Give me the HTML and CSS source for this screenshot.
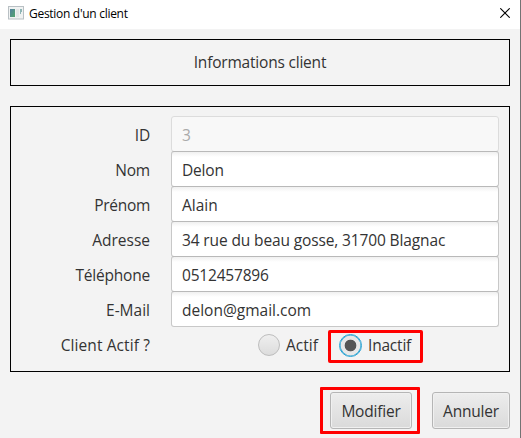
FILE: index.html
```html
<!DOCTYPE html>
<html lang="fr">
<head>
<meta charset="utf-8">
<title>Gestion d'un client</title>
<link rel="stylesheet" href="styles.css">
</head>
<body>
<div class="window">
  <header class="titlebar">
    <svg class="app-icon" width="16" height="14" viewBox="0 0 16 14">
      <defs><linearGradient id="pane" x1="0" y1="0" x2="1" y2="1"><stop offset="0" stop-color="#527f9f"/><stop offset="1" stop-color="#54a66c"/></linearGradient></defs>
      <rect x=".5" y=".5" width="15" height="12.5" fill="#f0f2f2" stroke="#b9c0c4"/>
      <rect x="2" y="3" width="5" height="8" fill="url(#pane)"/>
      <rect x="8" y="3" width="3" height="8" fill="#e3e6e7"/>
      <path d="M12 3h2v3h-1v2h-1z" fill="#8db5b5"/>
    </svg>
    <span class="title">Gestion d'un client</span>
    <svg class="close" width="10" height="10" viewBox="0 0 10 10"><path d="M.3.3l9.4 9.4M9.7.3L.3 9.7" stroke="#000" stroke-width="1.1"/></svg>
  </header>
  <main class="content">
    <h1 class="heading"><span>Informations client</span></h1>
    <form class="panel">
      <label>ID</label><div class="field disabled"><span>3</span></div>
      <label>Nom</label><div class="field"><span>Delon</span></div>
      <label class="tight">Prénom</label><div class="field"><span class="normal">Alain</span></div>
      <label class="normal">Adresse</label><div class="field"><span class="address">34 rue du beau gosse, 31700 Blagnac</span></div>
      <label>Téléphone</label><div class="field"><span>0512457896</span></div>
      <label class="normal">E-Mail</label><div class="field"><span class="normal">delon@gmail.com</span></div>
      <label class="loose">Client Actif ?</label>
      <div class="radios">
        <div class="option"><span class="radio"></span><span class="normal">Actif</span></div>
        <div class="option marked"><span class="radio selected"></span><span>Inactif</span></div>
      </div>
    </form>
    <footer class="actions">
      <div class="highlight"><button class="modify"><span>Modifier</span></button></div>
      <button class="cancel"><span>Annuler</span></button>
    </footer>
  </main>
</div>
</body>
</html>
```
FILE: styles.css
```css
* { box-sizing: border-box; }
body {
  margin: 0;
  font: 15.5px/20px "Open Sans", "Noto Sans", sans-serif;
  color: #333;
  letter-spacing: -0.2px;
  white-space: nowrap;
}
.normal { letter-spacing: 0; }
.tight { letter-spacing: -0.3px; }
.loose { letter-spacing: 0.1px; }
.address { letter-spacing: -0.13px; }
.window {
  width: 521px;
  height: 438px;
  background: #f3f3f3;
  border-right: 1px solid #737373;
  overflow: hidden;
}
.titlebar {
  display: flex;
  align-items: center;
  height: 29px;
  padding: 0 10px 3px 8px;
  background: #fff;
}
.title {
  margin: 2px auto 0 5px;
  font-size: 12px;
  line-height: 16px;
  color: #000;
  letter-spacing: -0.29px;
}
.content { padding: 10px 10px 0; }
.heading {
  display: flex;
  align-items: center;
  justify-content: center;
  height: 47px;
  margin: 0 0 20px;
  padding-bottom: 1px;
  border: 1px solid #000;
  font: inherit;
}
.panel {
  display: grid;
  grid-template-columns: 140px 328px;
  grid-template-rows: repeat(6, 35px) 36px;
  column-gap: 20px;
  height: 266px;
  padding-top: 9px;
  border: 1px solid #000;
}
.panel label {
  padding-right: 1px;
  text-align: right;
  line-height: 38px;
}
.field {
  height: 36px;
  padding-left: 10px;
  line-height: 36px;
  border: 1px solid #c8c8c8;
  border-top-color: #b9b9b9;
  border-radius: 3px;
  background: linear-gradient(#f0f0f0, #fff 5px);
}
.field.disabled {
  color: #aaa;
  border-color: #dcdcdc;
  background: #f8f8f8;
}
.radios {
  display: flex;
  height: 33px;
  margin-top: 4px;
  padding-left: 87px;
}
.option {
  display: flex;
  align-items: center;
  height: 30px;
}
.radio {
  flex: none;
  width: 22px;
  height: 22px;
  margin-right: 6px;
  border: 1px solid #bdbdbd;
  border-radius: 50%;
  background: linear-gradient(#efefef, #dcdcdc);
}
.radio.selected {
  width: 23px;
  height: 23px;
  border: 1px solid #26a3d4;
  box-shadow: inset 0 0 0 0.6px #26a3d4;
  background: radial-gradient(circle, #555 5.5px, #e8e8e8 6.2px);
}
.marked {
  width: 95px;
  height: 33px;
  margin: 0 76px 0 auto;
  padding: 0 0 3px 8px;
  border: 3px solid #f00;
  border-radius: 2px;
}
.actions {
  display: flex;
  justify-content: flex-end;
  align-items: center;
  gap: 12px;
  margin-top: 15px;
}
.highlight {
  width: 100px;
  height: 47px;
  padding: 2px 7px;
  border: 3px solid #f00;
  border-radius: 1px;
}
button {
  display: flex;
  align-items: center;
  justify-content: center;
  height: 37px;
  padding: 0;
  border: 1px solid #b5b5b5;
  border-radius: 3px;
  background: linear-gradient(#ededed, #dadada);
  box-shadow: inset 0 0 0 1px #f0f0f0;
  font: inherit;
  color: inherit;
  letter-spacing: inherit;
}
.modify { width: 82px; }
.cancel { width: 78px; }
```
